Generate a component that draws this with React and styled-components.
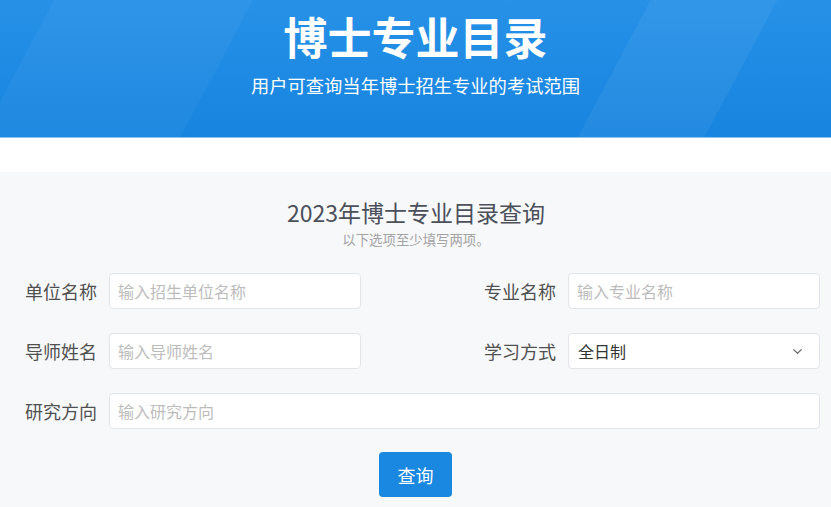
import React from 'react';
import styled, { createGlobalStyle } from 'styled-components';
import { ChevronDown } from 'lucide-react';

const GlobalStyle = createGlobalStyle`
  html, body {
    margin: 0;
    padding: 0;
    background: #ffffff;
    font-family: "Noto Sans CJK SC", "Noto Sans", "Liberation Sans", sans-serif;
  }
  * { box-sizing: border-box; }
`;

const Banner = styled.header`
  height: 138px;
  padding-top: 10px;
  text-align: center;
  color: #fff;
  border-bottom: 1px solid #8cc6f2;
  background:
    linear-gradient(118deg, transparent 0 6%, rgba(255,255,255,0.035) 6% 28%, transparent 28% 100%),
    linear-gradient(118deg, transparent 0 72%, rgba(255,255,255,0.05) 72% 86%, transparent 86% 100%),
    linear-gradient(180deg, #2791e7 0%, #1784df 100%);
`;

const BannerTitle = styled.h1`
  margin: 0;
  font-size: 44px;
  line-height: 53px;
  font-weight: 700;
`;

const BannerSub = styled.p`
  margin: 10px 0 0;
  font-size: 18.3px;
  line-height: 24px;
`;

const Gap = styled.div`
  height: 34px;
  background: #fff;
`;

const Section = styled.section`
  background: #f7f8fa;
  min-height: 340px;
  padding: 26px 11px 0 12px;
`;

const Heading = styled.h2`
  margin: 0;
  text-align: center;
  font-size: 23px;
  line-height: 28px;
  font-weight: 400;
  color: #4b505b;
`;

const Hint = styled.p`
  margin: 4px 0 0;
  text-align: center;
  font-size: 13.4px;
  line-height: 18px;
  color: #a3a3a3;
`;

const Form = styled.form`
  margin-top: 25px;
  display: grid;
  grid-template-columns: 85px 252px 1fr 85px 252px;
  grid-auto-rows: 36px;
  column-gap: 12px;
  row-gap: 24px;
  align-items: center;
`;

const Label = styled.label`
  grid-column: ${p => p.$col};
  text-align: right;
  font-size: 18px;
  color: #505050;
  white-space: nowrap;
`;

const Input = styled.input`
  grid-column: ${p => p.$span || 'auto'};
  height: 36px;
  width: 100%;
  border: 1px solid #e2e5ea;
  border-radius: 4px;
  background: #fff;
  padding: 0 8px;
  font-family: inherit;
  font-size: 16px;
  color: #333;
  outline: none;
  &::placeholder { color: #bcbcbc; }
`;

const SelectBox = styled.div`
  height: 36px;
  border: 1px solid #e2e5ea;
  border-radius: 4px;
  background: #fff;
  padding: 0 14px 0 9px;
  display: flex;
  align-items: center;
  justify-content: space-between;
  font-size: 16px;
  color: #333;
`;

const Actions = styled.div`
  display: flex;
  justify-content: center;
  margin-top: 23px;
  padding-right: 1px;
`;

const Button = styled.button`
  width: 73px;
  height: 45px;
  border: none;
  border-radius: 4px;
  background: #1a88e0;
  color: #fff;
  font-family: inherit;
  font-size: 18px;
  cursor: pointer;
`;

export default function App() {
  return (
    <>
      <GlobalStyle />
      <Banner>
        <BannerTitle>博士专业目录</BannerTitle>
        <BannerSub>用户可查询当年博士招生专业的考试范围</BannerSub>
      </Banner>
      <Gap />
      <Section>
        <Heading>2023年博士专业目录查询</Heading>
        <Hint>以下选项至少填写两项。</Hint>
        <Form onSubmit={e => e.preventDefault()}>
          <Label $col={1}>单位名称</Label>
          <Input placeholder="输入招生单位名称" />
          <Label $col={4}>专业名称</Label>
          <Input placeholder="输入专业名称" />

          <Label $col={1}>导师姓名</Label>
          <Input placeholder="输入导师姓名" />
          <Label $col={4}>学习方式</Label>
          <SelectBox>
            <span>全日制</span>
            <ChevronDown size={15} color="#666" strokeWidth={2} />
          </SelectBox>

          <Label $col={1}>研究方向</Label>
          <Input $span="2 / 6" placeholder="输入研究方向" />
        </Form>
        <Actions>
          <Button type="button">查询</Button>
        </Actions>
      </Section>
    </>
  );
}
